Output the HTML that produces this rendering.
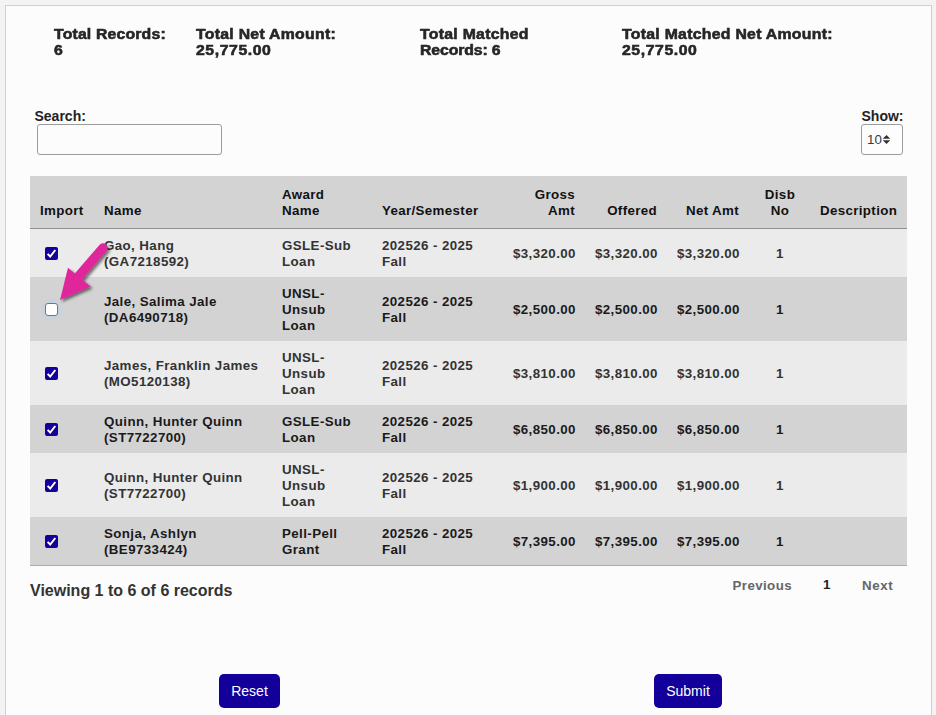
<!DOCTYPE html>
<html><head><meta charset="utf-8">
<style>
html,body{margin:0;padding:0;}
body{width:936px;height:715px;overflow:hidden;background:#f3f3f3;font-family:"Liberation Sans",sans-serif;color:#333;position:relative;}
#box{position:absolute;left:5px;top:5px;width:925px;height:800px;border:1px solid #cfcfcf;background:#fcfcfc;}
.abs{position:absolute;white-space:nowrap;}
.sum{position:absolute;font-weight:bold;font-size:13.8px;line-height:16px;color:#262626;letter-spacing:0.15px;-webkit-text-stroke:0.55px #262626;transform:scaleX(1.145);transform-origin:0 0;}
.lbl{position:absolute;font-weight:bold;font-size:14px;line-height:16px;color:#222;letter-spacing:0px;}
#search{position:absolute;left:37px;top:124px;width:183px;height:29px;border:1px solid #9c9c9c;border-radius:3px;background:#fcfcfc;box-sizing:content-box;}
#show{position:absolute;left:861px;top:124px;width:40px;height:29px;border:1px solid #9c9c9c;border-radius:3px;background:#fdfdfd;}
table{position:absolute;left:30px;top:176px;border-collapse:collapse;table-layout:fixed;width:877px;}
th{background:#d3d3d3;font-weight:bold;font-size:13.33px;line-height:16px;padding:10.5px 10px 9.5px;text-align:left;vertical-align:bottom;color:#111;border-bottom:1px solid #8f8f8f;letter-spacing:0.35px;}
td{font-weight:bold;font-size:13.33px;line-height:16px;padding:8.5px 10px 7.5px;text-align:left;vertical-align:middle;letter-spacing:0.4px;}
tr.o td{background:#ebebeb;color:#333;}
tr.e td{background:#d3d3d3;color:#1a1a1a;}
tbody tr:last-child td{border-bottom:1px solid #ababab;}
.r{text-align:right !important;}
.c{text-align:center !important;}
.cb{display:block;width:13px;height:13px;box-sizing:border-box;border-radius:2px;margin-left:5px;position:relative;}
.cb.on{background:#13009a;}
.cb.off{background:#fff;border:1px solid #767676;border-radius:3px;box-shadow:0 0 4px 2px rgba(175,210,240,0.55);}
.btn{position:absolute;top:674px;height:34px;background:#13009a;color:#fff;border-radius:5px;font-size:14px;line-height:34px;text-align:center;}
</style></head><body>
<div id="box"></div>

<div class="sum" style="left:54px;top:26.5px;">Total Records:<br>6</div>
<div class="sum" style="left:196px;top:26.5px;"><span style="letter-spacing:0.25px">Total Net Amount:</span><br><span style="letter-spacing:0.5px">25,775.00</span></div>
<div class="sum" style="left:420px;top:26.5px;"><span style="letter-spacing:0.25px">Total Matched</span><br><span style="letter-spacing:-0.1px">Records: 6</span></div>
<div class="sum" style="left:622px;top:26.5px;"><span style="letter-spacing:0.25px">Total Matched Net Amount:</span><br><span style="letter-spacing:0.5px">25,775.00</span></div>

<div class="lbl" style="left:34.5px;top:107.5px;">Search:</div>
<div id="search"></div>
<div class="lbl" style="left:861.5px;top:107.5px;">Show:</div>
<div id="show"><span class="abs" style="left:5px;top:6.5px;font-size:13.33px;line-height:16px;color:#3a3a3a;">10</span>
<svg class="abs" style="left:19.5px;top:9px;" width="9" height="11" viewBox="0 0 9 11"><path d="M0.7 4.7 L4.5 1 L8.3 4.7 Z M0.7 6.3 L4.5 10 L8.3 6.3 Z" fill="#333"/></svg></div>

<table>
<colgroup><col style="width:64px"><col style="width:178px"><col style="width:100px"><col style="width:131px"><col style="width:82px"><col style="width:82px"><col style="width:82px"><col style="width:62px"><col style="width:96px"></colgroup>
<thead><tr><th>Import</th><th>Name</th><th>Award<br>Name</th><th>Year/Semester</th><th class="r">Gross<br>Amt</th><th class="r">Offered</th><th class="r">Net Amt</th><th class="c">Disb<br>No</th><th style="padding-left:9px">Description</th></tr></thead>
<tbody>
<tr class="o"><td><span class="cb on"><svg class="abs" style="left:0;top:0" width="13" height="13" viewBox="0 0 13 13"><path d="M2.6 6.9 L5.2 9.5 L10.3 3" fill="none" stroke="#fff" stroke-width="2"/></svg></span></td><td>Gao, Hang<br>(GA7218592)</td><td>GSLE-Sub<br>Loan</td><td>202526 - 2025<br>Fall</td><td class="r">$3,320.00</td><td class="r">$3,320.00</td><td class="r">$3,320.00</td><td class="c">1</td><td></td></tr>
<tr class="e"><td><span class="cb off"></span></td><td>Jale, Salima Jale<br>(DA6490718)</td><td>UNSL-<br>Unsub<br>Loan</td><td>202526 - 2025<br>Fall</td><td class="r">$2,500.00</td><td class="r">$2,500.00</td><td class="r">$2,500.00</td><td class="c">1</td><td></td></tr>
<tr class="o"><td><span class="cb on"><svg class="abs" style="left:0;top:0" width="13" height="13" viewBox="0 0 13 13"><path d="M2.6 6.9 L5.2 9.5 L10.3 3" fill="none" stroke="#fff" stroke-width="2"/></svg></span></td><td>James, Franklin James<br>(MO5120138)</td><td>UNSL-<br>Unsub<br>Loan</td><td>202526 - 2025<br>Fall</td><td class="r">$3,810.00</td><td class="r">$3,810.00</td><td class="r">$3,810.00</td><td class="c">1</td><td></td></tr>
<tr class="e"><td><span class="cb on"><svg class="abs" style="left:0;top:0" width="13" height="13" viewBox="0 0 13 13"><path d="M2.6 6.9 L5.2 9.5 L10.3 3" fill="none" stroke="#fff" stroke-width="2"/></svg></span></td><td>Quinn, Hunter Quinn<br>(ST7722700)</td><td>GSLE-Sub<br>Loan</td><td>202526 - 2025<br>Fall</td><td class="r">$6,850.00</td><td class="r">$6,850.00</td><td class="r">$6,850.00</td><td class="c">1</td><td></td></tr>
<tr class="o"><td><span class="cb on"><svg class="abs" style="left:0;top:0" width="13" height="13" viewBox="0 0 13 13"><path d="M2.6 6.9 L5.2 9.5 L10.3 3" fill="none" stroke="#fff" stroke-width="2"/></svg></span></td><td>Quinn, Hunter Quinn<br>(ST7722700)</td><td>UNSL-<br>Unsub<br>Loan</td><td>202526 - 2025<br>Fall</td><td class="r">$1,900.00</td><td class="r">$1,900.00</td><td class="r">$1,900.00</td><td class="c">1</td><td></td></tr>
<tr class="e"><td><span class="cb on"><svg class="abs" style="left:0;top:0" width="13" height="13" viewBox="0 0 13 13"><path d="M2.6 6.9 L5.2 9.5 L10.3 3" fill="none" stroke="#fff" stroke-width="2"/></svg></span></td><td>Sonja, Ashlyn<br>(BE9733424)</td><td>Pell-Pell<br>Grant</td><td>202526 - 2025<br>Fall</td><td class="r">$7,395.00</td><td class="r">$7,395.00</td><td class="r">$7,395.00</td><td class="c">1</td><td></td></tr>
</tbody></table>

<div class="abs" style="left:30px;top:582px;font-size:16px;line-height:18px;font-weight:bold;color:#333;">Viewing 1 to 6 of 6 records</div>
<div class="abs" style="left:732.5px;top:578px;font-size:13.33px;line-height:16px;font-weight:bold;color:#666;letter-spacing:0.4px;">Previous</div>
<div class="abs" style="left:823px;top:577px;font-size:13.33px;line-height:16px;font-weight:bold;color:#222;">1</div>
<div class="abs" style="left:862px;top:578px;font-size:13.33px;line-height:16px;font-weight:bold;color:#666;letter-spacing:0.6px;">Next</div>

<div class="btn" style="left:219px;width:61px;">Reset</div>
<div class="btn" style="left:654px;width:68px;">Submit</div>

<svg class="abs" style="left:0;top:0;" width="936" height="715" viewBox="0 0 936 715">
<defs><filter id="sh" x="-50%" y="-50%" width="200%" height="200%"><feGaussianBlur in="SourceAlpha" stdDeviation="1.8"/><feOffset dx="2" dy="2" result="b"/><feComponentTransfer><feFuncA type="linear" slope="0.55"/></feComponentTransfer><feMerge><feMergeNode/><feMergeNode in="SourceGraphic"/></feMerge></filter></defs>
<g filter="url(#sh)">
<line x1="103" y1="248" x2="78" y2="277" stroke="#e0289b" stroke-width="9.5" stroke-linecap="round"/>
<path d="M68 267.7 L90.7 286.6 L60 300 Z" fill="#e0289b"/>
</g>
</svg>
</body></html>
